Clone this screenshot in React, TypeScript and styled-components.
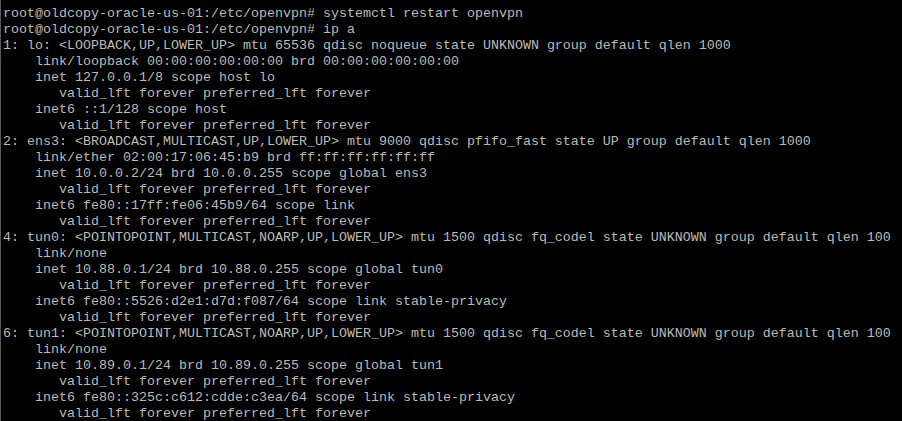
import React from "react";
import styled, { createGlobalStyle } from "styled-components";

const Global = createGlobalStyle`
  html, body { margin: 0; padding: 0; background: #000; }
  body { width: 902px; height: 421px; overflow: hidden; }
`;

const Terminal = styled.div`
  box-sizing: border-box;
  width: 902px;
  height: 421px;
  background: #000;
  border-left: 1px solid #5a5a5a;
  padding: 6px 0 0 2px;
  overflow: hidden;
  display: flex;
  flex-direction: column;
`;

const Line = styled.div`
  font-family: "Liberation Mono", "Courier New", monospace;
  font-size: 13.333px;
  line-height: 16px;
  height: 16px;
  flex: none;
  color: #bbbbbb;
  white-space: pre;
`;

const lines = [
  "root@oldcopy-oracle-us-01:/etc/openvpn# systemctl restart openvpn",
  "root@oldcopy-oracle-us-01:/etc/openvpn# ip a",
  "1: lo: <LOOPBACK,UP,LOWER_UP> mtu 65536 qdisc noqueue state UNKNOWN group default qlen 1000",
  "    link/loopback 00:00:00:00:00:00 brd 00:00:00:00:00:00",
  "    inet 127.0.0.1/8 scope host lo",
  "       valid_lft forever preferred_lft forever",
  "    inet6 ::1/128 scope host",
  "       valid_lft forever preferred_lft forever",
  "2: ens3: <BROADCAST,MULTICAST,UP,LOWER_UP> mtu 9000 qdisc pfifo_fast state UP group default qlen 1000",
  "    link/ether 02:00:17:06:45:b9 brd ff:ff:ff:ff:ff:ff",
  "    inet 10.0.0.2/24 brd 10.0.0.255 scope global ens3",
  "       valid_lft forever preferred_lft forever",
  "    inet6 fe80::17ff:fe06:45b9/64 scope link",
  "       valid_lft forever preferred_lft forever",
  "4: tun0: <POINTOPOINT,MULTICAST,NOARP,UP,LOWER_UP> mtu 1500 qdisc fq_codel state UNKNOWN group default qlen 100",
  "    link/none",
  "    inet 10.88.0.1/24 brd 10.88.0.255 scope global tun0",
  "       valid_lft forever preferred_lft forever",
  "    inet6 fe80::5526:d2e1:d7d:f087/64 scope link stable-privacy",
  "       valid_lft forever preferred_lft forever",
  "6: tun1: <POINTOPOINT,MULTICAST,NOARP,UP,LOWER_UP> mtu 1500 qdisc fq_codel state UNKNOWN group default qlen 100",
  "    link/none",
  "    inet 10.89.0.1/24 brd 10.89.0.255 scope global tun1",
  "       valid_lft forever preferred_lft forever",
  "    inet6 fe80::325c:c612:cdde:c3ea/64 scope link stable-privacy",
  "       valid_lft forever preferred_lft forever",
];

export default function App() {
  return (
    <>
      <Global />
      <Terminal>
        {lines.map((l, i) => (
          <Line key={i}>{l}</Line>
        ))}
      </Terminal>
    </>
  );
}
